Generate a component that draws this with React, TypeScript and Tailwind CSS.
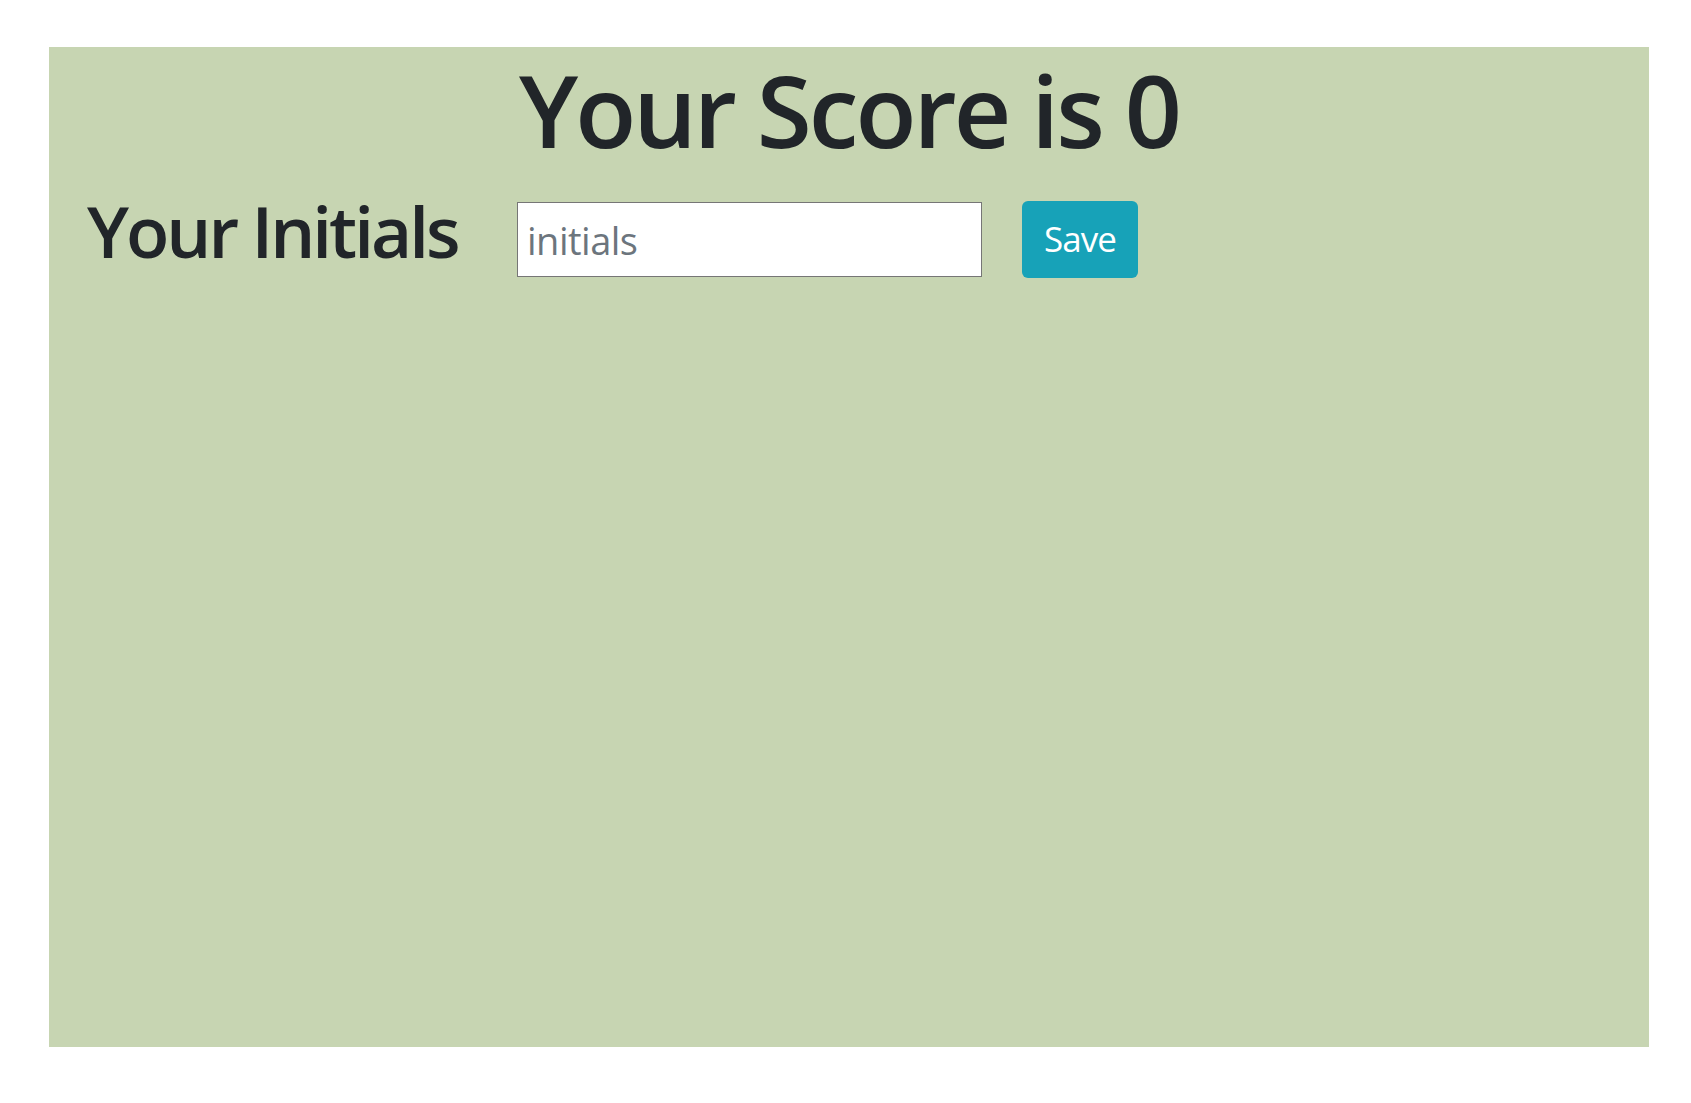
import { useState } from "react";

export default function App() {
  const [initials, setInitials] = useState("");
  const score = 0;

  return (
    <div className="min-h-screen bg-white pt-[47px] pl-[49px] font-['Open_Sans',sans-serif] text-[#212529]">
      <div className="w-[1600px] h-[1000px] bg-[#c7d5b2]">
        <h1 className="pt-[2px] text-center text-[100px] leading-[1.2] font-semibold tracking-[-3px]">
          Your Score is {score}
        </h1>

        <div className="mt-[32px] flex items-start">
          <label
            htmlFor="initials"
            className="w-[468px] pl-[38px] -mt-[9px] text-[71px] leading-[77px] font-semibold tracking-[-3px]"
          >
            Your Initials
          </label>
          <input
            id="initials"
            type="text"
            value={initials}
            onChange={(e) => setInitials(e.target.value)}
            placeholder="initials"
            className="mt-[1px] w-[465px] h-[75px] border border-[#767676] bg-white pl-[9px] text-[38px] text-[#212529] placeholder:text-[#6c757d] outline-none tracking-[-0.5px]"
          />
          <button
            type="button"
            className="ml-[40px] w-[116px] h-[77px] rounded-[6px] bg-[#17a2b8] text-[35px] text-white tracking-[-1px]"
          >
            Save
          </button>
        </div>
      </div>
    </div>
  );
}
